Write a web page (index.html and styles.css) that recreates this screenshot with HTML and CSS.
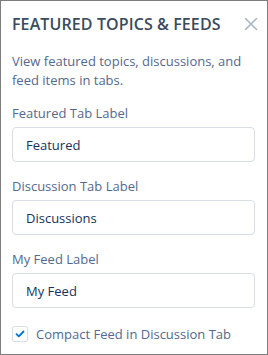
FILE: index.html
```html
<!DOCTYPE html>
<html>
<head>
<meta charset="utf-8">
<link rel="stylesheet" href="styles.css">
</head>
<body>
<div class="panel">
  <div class="header">
    <h2 class="title">FEATURED TOPICS &amp; FEEDS</h2>
    <svg class="close" width="14" height="14" viewBox="0 0 14 14"><path d="M1.5 1.5 L12.5 12.5 M12.5 1.5 L1.5 12.5" stroke="#a8b7c7" stroke-width="1.6" stroke-linecap="round" fill="none"/></svg>
  </div>
  <p class="desc">View featured topics, discussions, and feed items in tabs.</p>
  <div class="field">
    <label class="label">Featured Tab Label</label>
    <div class="input">Featured</div>
  </div>
  <div class="field">
    <label class="label">Discussion Tab Label</label>
    <div class="input">Discussions</div>
  </div>
  <div class="field">
    <label class="label">My Feed Label</label>
    <div class="input">My Feed</div>
  </div>
  <div class="check-row">
    <span class="box"><svg width="10" height="8" viewBox="0 0 10 8"><path d="M1.5 4.2 L3.8 6.3 L8.5 1.5" stroke="#0070d2" stroke-width="1.8" fill="none" stroke-linecap="round" stroke-linejoin="round"/></svg></span>
    <span class="check-label">Compact Feed in Discussion Tab</span>
  </div>
</div>
</body>
</html>
```
FILE: styles.css
```css
html, body { margin: 0; padding: 0; background: #fff; }
body { font-family: "Open Sans", "Liberation Sans", sans-serif; }
.panel {
  box-sizing: border-box;
  width: 268px;
  height: 355px;
  border: 1px solid #7d7d7d;
  padding: 0 12px 0 11px;
  overflow: hidden;
}
.header {
  display: flex;
  align-items: center;
  justify-content: space-between;
  padding-top: 11px;
  height: 24px;
}
.title {
  margin: 0;
  font-size: 16px;
  line-height: 24px;
  font-weight: 600;
  color: #3a4b5e;
  letter-spacing: 0.1px;
}
.close { margin-right: -3px; }
.desc {
  margin: 16px 0 0;
  font-size: 13px;
  line-height: 19px;
  color: #54698d;
}
.field { margin-top: 14px; }
.field + .field { margin-top: 15px; }
.label {
  display: block;
  font-size: 13px;
  line-height: 18px;
  color: #54698d;
}
.input {
  box-sizing: border-box;
  margin-top: 5px;
  height: 35px;
  border: 1px solid #d8dde6;
  border-radius: 4px;
  padding: 0 13px;
  display: flex;
  align-items: center;
  font-size: 13px;
  color: #16325c;
}
.check-row {
  display: flex;
  align-items: center;
  margin-top: 17px;
  line-height: 18px;
}
.box {
  box-sizing: border-box;
  width: 16px;
  height: 16px;
  border: 1px solid #d8dde6;
  border-radius: 2px;
  display: flex;
  align-items: center;
  justify-content: center;
}
.check-label {
  margin-left: 8px;
  font-size: 13px;
  color: #54698d;
}
```
